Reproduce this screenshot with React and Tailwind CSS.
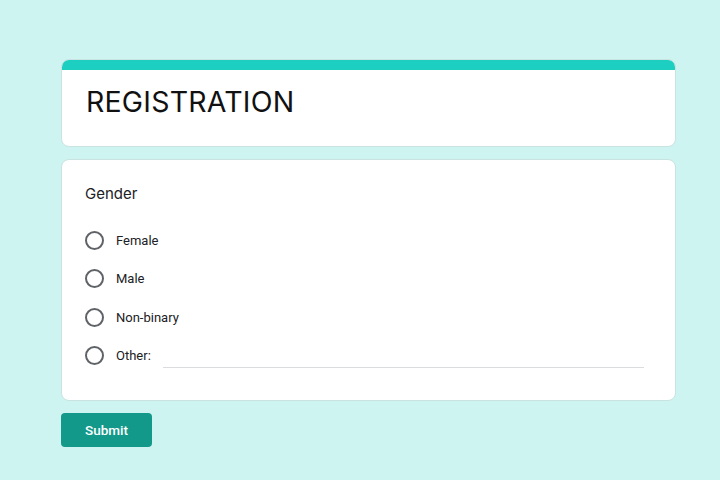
export default function App() {
  const opts = ["Female", "Male", "Non-binary"];
  return (
    <div className="w-[720px] h-[480px] bg-[#cdf4f1] overflow-hidden" style={{ fontFamily: "Roboto, 'Noto Sans', sans-serif" }}>
      <div className="pt-[59px] ml-[61px] w-[615px] flex flex-col">
        <div className="rounded-lg bg-white border border-[#c9e3e1] overflow-hidden h-[88px] flex flex-col">
          <div className="h-[10px] bg-[#1ccfc0] shrink-0" />
          <div className="pl-[24px] pt-[14px] text-[28.5px] leading-[36px] text-[#111] tracking-[0.2px]" style={{ fontFamily: "Inter, Roboto, sans-serif", fontWeight: 380 }}>
            REGISTRATION
          </div>
        </div>
        <div className="mt-[12px] rounded-lg bg-white border border-[#c9e3e1] h-[242px] pl-[23px] pr-[31px] pt-[24px]">
          <div className="text-[15px] leading-[20px] text-[#202124]" style={{ fontFamily: "Inter, Roboto, sans-serif" }}>Gender</div>
          <div className="mt-[17px] flex flex-col">
            {opts.map((o) => (
              <div key={o} className="flex items-center h-[38.5px]">
                <div className="w-[19px] h-[19px] rounded-full border-2 border-[#5f6368]" />
                <span className="ml-[12px] text-[13px] text-[#202124]">{o}</span>
              </div>
            ))}
            <div className="flex items-center h-[38.5px]">
              <div className="w-[19px] h-[19px] rounded-full border-2 border-[#5f6368]" />
              <span className="ml-[12px] text-[13px] text-[#202124]">Other:</span>
              <div className="ml-[12px] flex-1 self-end mb-[7px] h-px bg-[#dadce0]" />
            </div>
          </div>
        </div>
        <div className="mt-[12px]">
          <button className="w-[91px] h-[34px] rounded bg-[#12998a] text-white text-[13.5px] font-medium">Submit</button>
        </div>
      </div>
    </div>
  );
}
